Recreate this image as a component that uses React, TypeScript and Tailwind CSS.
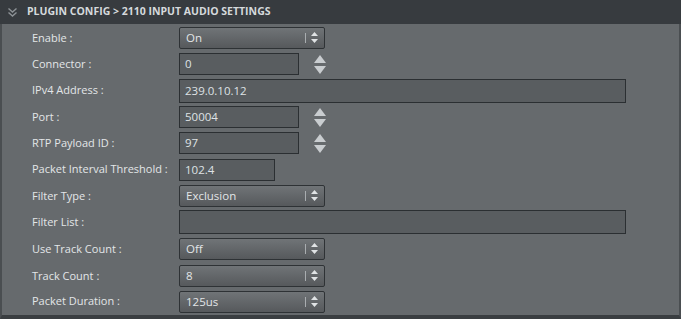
import React from "react";

const font = { fontFamily: '"Open Sans", "Noto Sans", sans-serif' };

function SelectBox({ value }: { value: string }) {
  return (
    <div className="relative flex items-center w-[146px] h-[22px] rounded-[2px] border border-[#2e3235] bg-gradient-to-b from-[#707477] to-[#56595c] pl-[6px] text-[11.5px] text-[#e2e5e7]">
      <span>{value}</span>
      <div className="absolute right-[18px] top-[5px] w-px h-[10px] bg-[#a9adb0]" />
      <svg className="absolute right-[6px] top-[4px]" width="7" height="11" viewBox="0 0 7 11">
        <polygon points="3.5,0 7,4 0,4" fill="#e0e3e5" />
        <polygon points="0,7 7,7 3.5,11" fill="#e0e3e5" />
      </svg>
    </div>
  );
}

function TextBox({ value, w }: { value: string; w: string }) {
  return (
    <div className={`flex items-center ${w} h-[22px] border border-[#2b2f32] bg-[#595d60] pl-[5px] text-[11.5px] text-[#dfe2e5]`}>
      {value}
    </div>
  );
}

function Spin() {
  return (
    <svg className="ml-[15px]" width="12" height="19" viewBox="0 0 12 19">
      <polygon points="6,0 12,8 0,8" fill="#c9cdd0" />
      <polygon points="0,11 12,11 6,19" fill="#c9cdd0" />
    </svg>
  );
}

type Row = { label: string; h: string; ctrl: React.ReactNode };

export default function App() {
  const rows: Row[] = [
    { label: "Enable :", h: "h-[26px]", ctrl: <SelectBox value="On" /> },
    {
      label: "Connector :",
      h: "h-[26px]",
      ctrl: (
        <div className="flex items-center">
          <TextBox value="0" w="w-[120px]" />
          <Spin />
        </div>
      ),
    },
    { label: "IPv4 Address :", h: "h-[27px]", ctrl: <div className="flex items-center w-[447px] h-[24px] border border-[#2b2f32] bg-[#595d60] pl-[5px] text-[11.5px] text-[#dfe2e5]">239.0.10.12</div> },
    {
      label: "Port :",
      h: "h-[26px]",
      ctrl: (
        <div className="flex items-center">
          <TextBox value="50004" w="w-[120px]" />
          <Spin />
        </div>
      ),
    },
    {
      label: "RTP Payload ID :",
      h: "h-[26px]",
      ctrl: (
        <div className="flex items-center">
          <TextBox value="97" w="w-[120px]" />
          <Spin />
        </div>
      ),
    },
    { label: "Packet Interval Threshold :", h: "h-[27px]", ctrl: <TextBox value="102.4" w="w-[96px]" /> },
    { label: "Filter Type :", h: "h-[26px]", ctrl: <SelectBox value="Exclusion" /> },
    { label: "Filter List :", h: "h-[26px]", ctrl: <div className="w-[447px] h-[24px] border border-[#2b2f32] bg-[#595d60]" /> },
    { label: "Use Track Count :", h: "h-[28px]", ctrl: <SelectBox value="Off" /> },
    { label: "Track Count :", h: "h-[26px]", ctrl: <SelectBox value="8" /> },
    { label: "Packet Duration :", h: "h-[25px]", ctrl: <SelectBox value="125us" /> },
  ];

  return (
    <div style={font} className="w-[681px] h-[319px] bg-[#2f3235] flex flex-col">
      <div className="flex items-center h-[24px] bg-[#373b3f] pl-[7px]">
        <svg width="11" height="11" viewBox="0 0 11 11" fill="none" stroke="#8d9296" strokeWidth="1.4">
          <polyline points="1.5,1.5 5.5,5 9.5,1.5" />
          <polyline points="1.5,5.5 5.5,9 9.5,5.5" />
        </svg>
        <span className="ml-[9px] text-[10.5px] font-bold text-[#d5d9dc]">
          PLUGIN CONFIG &gt; 2110 INPUT AUDIO SETTINGS
        </span>
      </div>
      <div className="flex-1 flex flex-col bg-[#666a6d] border-l-2 border-r-2 border-l-[#4a4e51] border-r-[#4a4e51] pt-[1px] border-b-[4px] border-b-[#3a3e41]">
        {rows.map((r) => (
          <div key={r.label} className={`flex items-center ${r.h}`}>
            <div className="w-[177px] pl-[30px] whitespace-nowrap text-[11px] text-[#e3e6e8]">{r.label}</div>
            {r.ctrl}
          </div>
        ))}
      </div>
    </div>
  );
}
